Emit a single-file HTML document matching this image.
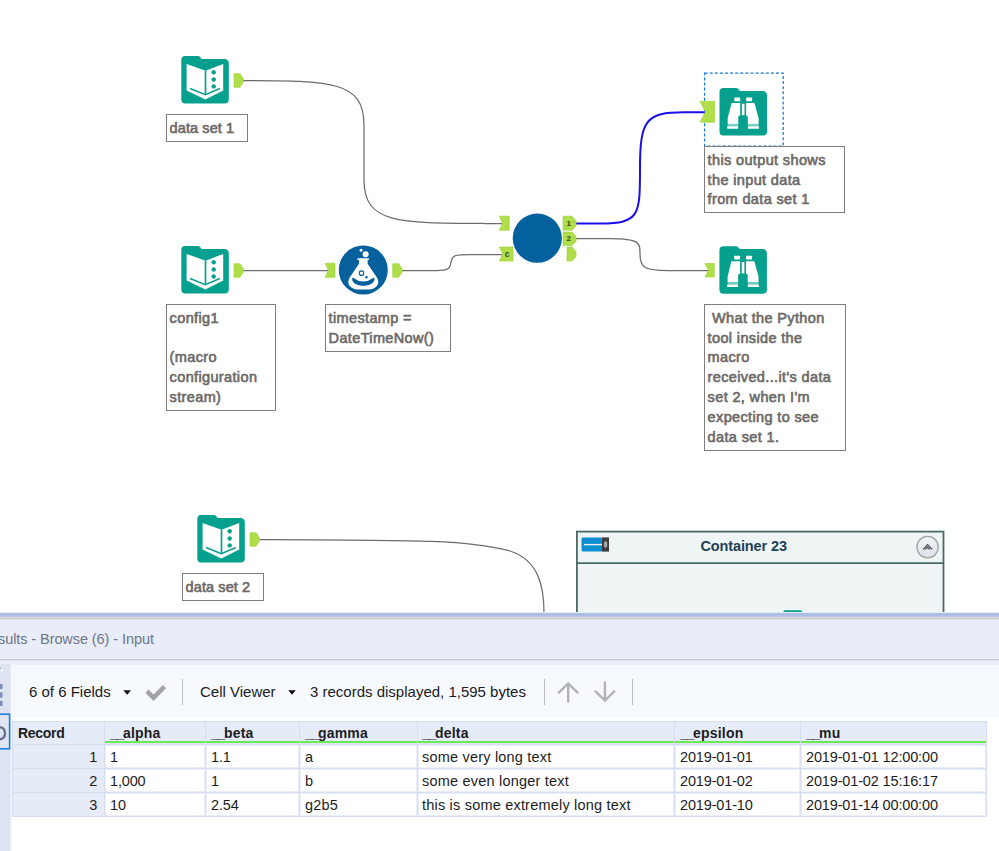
<!DOCTYPE html>
<html>
<head>
<meta charset="utf-8">
<title>Workflow</title>
<style>
html,body{margin:0;padding:0;}
body{width:999px;height:851px;overflow:hidden;background:#fff;position:relative;font-family:"Liberation Sans",sans-serif;}
#canvas{position:absolute;left:0;top:0;width:999px;height:851px;}
.note{position:absolute;box-sizing:border-box;border:1px solid #7e7e7e;background:#fff;color:#6c6967;-webkit-text-stroke:0.62px #6c6967;font-weight:normal;font-size:14.5px;line-height:19.9px;padding:3.6px 0 0 2.6px;white-space:pre;letter-spacing:0.36px;}
/* bottom panel */
#panel{position:absolute;left:0;top:612px;width:999px;height:239px;background:#fff;}
#band{position:absolute;left:0;top:0;width:999px;height:53px;background:linear-gradient(to bottom,
 #e6ecf7 0,#e6ecf7 1px,#adbfe5 1px,#adbfe5 4px,#b4c5e5 4px,#b4c5e5 5px,#e2e1df 5px,#e2e1df 6px,#c9c8c6 6px,#c9c8c6 7px,#e3e6f0 7px,#e3e6f0 8px,
 #e9edf9 8px,#e9edf9 46px,#edf1fb 46px,#edf1fb 47px,#c6c7ca 47px,#c6c7ca 48px,#dfe2ea 48px,#dfe2ea 49px,#ebeffa 49px,#ebeffa 53px);}
#title{position:absolute;left:0;top:6px;width:999px;height:41px;}
#title span{position:absolute;left:-20.4px;top:13.2px;font-size:14.5px;color:#6e7687;white-space:pre;letter-spacing:-0.08px;}
#strip{position:absolute;left:0;top:52px;width:12px;height:187px;background:linear-gradient(to right,#dde3f1 0,#dde3f1 10px,#e9edf7 10px,#e9edf7 11px,#f3f6fc 11px);border-top-right-radius:3px;}
#toolbar{position:absolute;left:11px;top:53px;width:988px;height:53px;background:#f6f9fe;border-top-left-radius:4px;border-bottom-left-radius:4px;}
.tb{position:absolute;top:71px;font-size:15px;color:#1b1b1b;white-space:pre;line-height:18px;}
.sep{position:absolute;top:67px;width:1.3px;height:26px;background:#bfc0c3;}
table{position:absolute;left:12px;top:109px;border-collapse:collapse;font-size:14.5px;color:#1d1d1d;table-layout:fixed;}
td,th{box-sizing:border-box;height:24px;border:1px solid #d8def1;box-shadow:inset 0 0 0 1px #eaeef9;padding:0 0 0 5px;text-align:left;white-space:nowrap;overflow:hidden;background:#fff;letter-spacing:0.2px;}
th{font-size:14px;letter-spacing:0.2px;background:#e6ebf8;font-weight:bold;box-shadow:inset 0 -1px 0 #dfe3f5, inset 0 -3px 0 #69ec52;color:#1d1d1d;padding-top:0;padding-bottom:0;height:23px;}
th.rec{box-shadow:none;letter-spacing:-0.3px;}
th .u{letter-spacing:-1.3px;}
td.rec{box-shadow:none;}
td.rec{background:#e6ebf8;text-align:right;padding:0 6.6px 0 0;letter-spacing:0;}
td.n{letter-spacing:-0.15px;}
td.d,th.d{padding-left:4px;}
</style>
</head>
<body>
<svg id="canvas" width="999" height="851" viewBox="0 0 999 851">
<defs>
  <linearGradient id="btnGrad" x1="0" y1="0" x2="0" y2="1"><stop offset="0" stop-color="#f2f4f7"/><stop offset="1" stop-color="#dbe0ea"/></linearGradient>
  <g id="inputIcon">
    <path d="M4,0 H16.4 Q18,0 19,1.2 L20.3,2.9 H43 Q47.5,2.9 47.5,7.4 V43.5 Q47.5,47.5 43.5,47.5 H4 Q0,47.5 0,43.5 V4 Q0,0 4,0 Z" fill="#06a08f"/>
    <path d="M5.3,7.9 L24.3,14.8 L41.9,7.9 V34.5 L24,43.6 L5.3,34.5 Z" fill="#fff"/>
    <path d="M24.2,14.6 V38.5" stroke="#06a08f" stroke-width="1.7" fill="none"/>
    <path d="M8.8,32.4 L24,38.7 L38.6,32.6" stroke="#06a08f" stroke-width="1.6" fill="none"/>
    <circle cx="32.4" cy="16.3" r="2.2" fill="#06a08f"/>
    <circle cx="32.4" cy="23.5" r="2.2" fill="#06a08f"/>
    <circle cx="32.4" cy="30.4" r="2.2" fill="#06a08f"/>
  </g>
  <g id="browseIcon">
    <path d="M4,0 H16.4 Q18,0 19,1.2 L20.3,2.9 H43 Q47.5,2.9 47.5,7.4 V43.5 Q47.5,47.5 43.5,47.5 H4 Q0,47.5 0,43.5 V4 Q0,0 4,0 Z" fill="#06a08f"/>
    <rect x="14.8" y="9.5" width="5.9" height="3.7" rx="0.6" fill="#fff"/>
    <rect x="26.6" y="9.5" width="6" height="3.7" rx="0.6" fill="#fff"/>
    <path d="M12.6,15.1 H20.7 V35.9 H8.2 V30.3 L11.9,15.8 Q12.1,15.1 12.6,15.1 Z" fill="#fff"/>
    <path d="M26.6,15.1 H34.5 Q35,15.1 35.2,15.8 L39.1,30.3 V35.9 H26.6 Z" fill="#fff"/>
    <rect x="8.2" y="35.9" width="30.9" height="2.3" fill="#7acfc5"/>
    <rect x="7.6" y="38.2" width="11.4" height="2.6" rx="0.5" fill="#fff"/>
    <rect x="28.1" y="38.2" width="11.4" height="2.6" rx="0.5" fill="#fff"/>
    <rect x="22.4" y="15.8" width="2.6" height="11.5" fill="#fff"/>
    <rect x="18.75" y="27.6" width="9.55" height="15" rx="1.6" fill="#06a08f"/>
  </g>
  <path id="ancOut" d="M0,0 H6 L9.5,5.4 V8.2 L6,13.6 H0 Z" fill="#b0de4a" stroke="#9bd233" stroke-width="0.6"/>
  <path id="ancIn" d="M0,0 H10 V14 H0 L3.4,7 Z" fill="#b0de4a" stroke="#9bd233" stroke-width="0.6"/>
</defs>

<!-- connections -->
<g fill="none" stroke="#6c6c6c" stroke-width="1.25">
  <path d="M243,80.5 C330,80.7 364,80.5 364,125 V180 C364,223.5 398,223.3 485,223.5 H502.5"/>
  <path d="M243,270.5 H328.6"/>
  <path d="M402,270.5 H436 C452,270.5 450,266 451,262 C452,255 456,254.5 470,254.5 H502.5"/>
  <path d="M576,238.5 H610 C640,238.5 640,243 640,254 C640,268 645,270.5 668,270.5 H708.4"/>
  <path d="M259.5,539.5 C420,540 470,540 510,551 C538,560 544,585 544,613"/>
</g>
<path d="M576,223.5 H600 C640,223.5 640,215 640,168 C640,120 646,112.3 684,112.3 H705.5" fill="none" stroke="#1a0fe8" stroke-width="2"/>

<!-- tool 1 -->
<use href="#inputIcon" x="181.3" y="56"/>
<use href="#ancOut" x="234" y="73.7"/>
<!-- tool config -->
<use href="#inputIcon" x="181.3" y="246"/>
<use href="#ancOut" x="234" y="263.7"/>
<!-- tool data set 2 -->
<use href="#inputIcon" x="197.3" y="515"/>
<use href="#ancOut" x="250" y="532.7"/>

<!-- formula -->
<use href="#ancIn" x="325" y="263.3"/>
<use href="#ancOut" x="392.7" y="263.7"/>
<circle cx="363.3" cy="270" r="24.5" fill="#05609e"/>
<g transform="translate(363.3,270)">
  <circle cx="-2.25" cy="-19.8" r="1.5" fill="#fff"/>
  <circle cx="2.3" cy="-15.8" r="3" fill="#fff"/>
  <path d="M-5.8,-11.7 H5.6 V-10 H4.3 V-6.3 L13.6,7.5 Q16.5,12.5 13.5,16 Q10.5,19.4 6,19.4 H-6 Q-10.5,19.4 -13.5,16 Q-16.5,12.5 -13.6,7.5 L-4.3,-6.3 V-10 H-5.8 Z" fill="#fff"/>
  <path d="M-11.2,8.2 Q-11.6,10.8 -9,13.2 Q-5,16.1 0,16.1 Q5,16.1 9,13.2 Q11.6,10.8 11.2,8.2 Q10.6,7.4 9.8,8 Q5,11.6 0,11.6 Q-5,11.6 -9.8,8 Q-10.6,7.4 -11.2,8.2 Z" fill="#05609e"/>
  <circle cx="-1.8" cy="3.15" r="2.25" fill="none" stroke="#05609e" stroke-width="1.1"/>
  <circle cx="3.15" cy="7.2" r="1.2" fill="#05609e"/>
</g>

<!-- macro -->
<use href="#ancIn" x="499.2" y="216.2"/>
<path d="M499.2,247 H513 V261 H499.2 L502.8,254 Z" fill="#b0de4a" stroke="#9bd233" stroke-width="0.6"/>
<circle cx="537.3" cy="238.2" r="24.6" fill="#05609e"/>
<path d="M563,216.2 H572 L576,220.7 V225.7 L572,230.2 H563 Z" fill="#b0de4a" stroke="#9bd233" stroke-width="0.6"/>
<path d="M563,232 H572 L576,236.5 V241.5 L572,245.6 H563 Z" fill="#b0de4a" stroke="#9bd233" stroke-width="0.6"/>
<path d="M567,247 H572 L576,251.5 V256.5 L572,261 H567 Z" fill="#b0de4a" stroke="#9bd233" stroke-width="0.6"/>
<text x="568.7" y="225.6" font-family="Liberation Sans, sans-serif" font-size="8" font-weight="bold" fill="#2f4a2a" text-anchor="middle">1</text>
<text x="568.7" y="241.2" font-family="Liberation Sans, sans-serif" font-size="8" font-weight="bold" fill="#2f4a2a" text-anchor="middle">2</text>
<text x="507.2" y="257" font-family="Liberation Sans, sans-serif" font-size="8.5" font-weight="bold" fill="#2f4a2a" text-anchor="middle">c</text>

<!-- browse 1 (selected) -->
<rect x="704.6" y="73" width="78.6" height="73" fill="none" stroke="#1479d6" stroke-width="1.25" stroke-dasharray="3 2.1"/>
<path d="M700,101.3 H714.6 V122.2 H700 L705.4,111.8 Z" fill="#b0de4a" stroke="#9bd233" stroke-width="0.6"/>
<use href="#browseIcon" x="719.5" y="88"/>
<!-- browse 2 -->
<path d="M705,263.5 H714.3 V277 H705 L708.4,270.3 Z" fill="#b0de4a" stroke="#9bd233" stroke-width="0.6"/>
<use href="#browseIcon" x="719.4" y="246.2"/>

<!-- container -->
<rect x="576.9" y="531.6" width="366.6" height="90" fill="#eff5f5" stroke="#4a6a66" stroke-width="1.8"/>
<path d="M576,563.1 H944" stroke="#4a6a66" stroke-width="1.8"/>
<rect x="581.5" y="537.4" width="21" height="14.2" rx="1.5" fill="#0c8fd1"/>
<rect x="602" y="537.4" width="7" height="14.2" fill="#3d3d3d"/>
<path d="M584,544.6 H602" stroke="#e8f4fb" stroke-width="1.4"/>
<ellipse cx="605.6" cy="544.5" rx="1.7" ry="3.2" fill="#a9a9a9"/>
<text x="700.4" y="550.6" font-family="Liberation Sans, sans-serif" font-size="14.5" font-weight="bold" fill="#1f4156" letter-spacing="-0.11">Container 23</text>
<circle cx="927.6" cy="547.1" r="10.7" fill="url(#btnGrad)" stroke="#a2a3a5" stroke-width="1.3"/>
<path d="M923.2,549.4 L927.6,544.6 L932.2,549.4 M925.4,549.5 L927.6,547.2 L929.9,549.5" fill="none" stroke="#4a4a4a" stroke-width="1.2"/>
<rect x="783.2" y="610.3" width="19" height="4" rx="2" fill="#06a08f"/>
</svg>

<div class="note" style="left:166px;top:114px;width:82px;height:28px;letter-spacing:0.1px;">data set 1</div>
<div class="note" style="left:166px;top:304px;width:110.4px;height:107.4px;">config1

(macro
configuration
stream)</div>
<div class="note" style="left:325px;top:304px;width:126px;height:47.5px;">timestamp =
DateTimeNow()</div>
<div class="note" style="left:704px;top:146px;width:140.5px;height:66.5px;">this output shows
the input data
from data set 1</div>
<div class="note" style="left:704px;top:304px;width:142.2px;height:147px;"> What the Python
tool inside the
macro
received...it's data
set 2, when I'm
expecting to see
data set 1.</div>
<div class="note" style="left:182px;top:573px;width:82px;height:28px;letter-spacing:0.1px;">data set 2</div>

<div id="panel">
  <div id="band"></div>
  <div id="title"><span>Results - Browse (6) - Input</span></div>
  <div id="strip"></div>
  <div id="toolbar"></div>
  <div class="tb" style="left:29px;">6 of 6 Fields</div>
  <div class="tb" style="left:200px;">Cell Viewer</div>
  <div class="tb" style="left:310px;">3 records displayed, 1,595 bytes</div>
  <div class="sep" style="left:182px;"></div>
  <div class="sep" style="left:544px;"></div>
  <div class="sep" style="left:632px;"></div>
  <svg style="position:absolute;left:0;top:0;" width="999" height="239" viewBox="0 612 999 239">
    <path d="M123.4,690.2 H131 L127.2,694.7 Z" fill="#111"/>
    <path d="M288.2,690.2 H295.8 L292,694.7 Z" fill="#111"/>
    <path d="M146.9,691.1 L153.5,697.9 L164.5,686.7" fill="none" stroke="#a3a3a3" stroke-width="4.5"/>
    <g fill="none" stroke="#b3b3b3" stroke-width="2.4" stroke-linecap="round">
      <path d="M568.2,701.5 V684 M558.8,692.6 L568.2,683.4 L577.6,692.6"/>
      <path d="M604.9,682.5 V700 M595.5,691.4 L604.9,700.6 L614.3,691.4"/>
    </g>
    <!-- left strip icons -->
    <g fill="#7c8cb6">
      <rect x="-1" y="684" width="3.5" height="5"/><rect x="-1" y="692.4" width="3.5" height="5.2"/><rect x="-1" y="700.8" width="3.5" height="5.2"/>
    </g>
    <circle cx="1.8" cy="670" r="1.5" fill="#fdfdfe"/><circle cx="0.3" cy="668.6" r="1" fill="#a9adb8"/>
    <rect x="-3" y="714.2" width="12.6" height="34.6" fill="#dfe5f2" stroke="#1b7fe0" stroke-width="1.6"/>
    <path d="M-2,727 Q5,727 5,733.2 Q5,739.4 -2,739.4" fill="none" stroke="#69738f" stroke-width="2.4"/>
  </svg>
  <table>
    <colgroup><col style="width:92px"><col style="width:101px"><col style="width:94px"><col style="width:118px"><col style="width:257px"><col style="width:126px"><col style="width:186px"></colgroup>
    <tr><th class="rec">Record</th><th><span class="u">__</span>alpha</th><th><span class="u">__</span>beta</th><th><span class="u">__</span>gamma</th><th class="d"><span class="u">__</span>delta</th><th><span class="u">__</span>epsilon</th><th><span class="u">__</span>mu</th></tr>
    <tr><td class="rec">1</td><td class="n">1</td><td class="n">1.1</td><td>a</td><td class="d">some very long text</td><td class="n">2019-01-01</td><td class="n">2019-01-01 12:00:00</td></tr>
    <tr><td class="rec">2</td><td class="n">1,000</td><td class="n">1</td><td>b</td><td class="d">some even longer text</td><td class="n">2019-01-02</td><td class="n">2019-01-02 15:16:17</td></tr>
    <tr><td class="rec">3</td><td class="n">10</td><td class="n">2.54</td><td>g2b5</td><td class="d">this is some extremely long text</td><td class="n">2019-01-10</td><td class="n">2019-01-14 00:00:00</td></tr>
  </table>
</div>
</body>
</html>
